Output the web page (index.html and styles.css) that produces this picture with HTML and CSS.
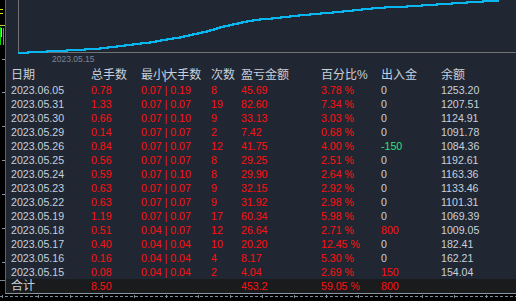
FILE: index.html
```html
<!DOCTYPE html>
<html>
<head>
<meta charset="utf-8">
<link rel="stylesheet" href="styles.css">
</head>
<body>
<div class="app">
  <div class="main">
    <svg class="strip" width="5" height="294" viewBox="0 0 5 294">
      <rect x="0" y="9" width="3" height="1" fill="#e6e600"/>
      <rect x="0" y="13" width="3" height="1" fill="#e6e600"/>
      <rect x="0" y="25" width="5" height="1" fill="#c8c850"/>
      <rect x="0" y="27" width="1" height="18" fill="#00dd00"/>
      <rect x="1" y="28" width="1" height="9" fill="#e6e600"/>
      <rect x="3" y="28" width="1" height="17" fill="#00dd00"/>
      <rect x="2" y="59" width="3" height="1" fill="#8a94a0"/>
      <rect x="2" y="92" width="3" height="1" fill="#8a94a0"/>
      <rect x="2" y="126" width="3" height="1" fill="#8a94a0"/>
      <rect x="2" y="160" width="3" height="1" fill="#8a94a0"/>
      <rect x="2" y="194" width="3" height="1" fill="#8a94a0"/>
      <rect x="2" y="228" width="3" height="1" fill="#8a94a0"/>
      <rect x="2" y="262" width="3" height="1" fill="#8a94a0"/>
      <rect x="0" y="280" width="5" height="1" fill="#7a8490"/>
    </svg>
    <div class="panel">
      <div class="chart">
        <svg class="plot" width="510" height="54" viewBox="6 0 510 54">
          <path class="axis" d="M18.5 0 V52.5 H516"/>
          <path class="equity" d="M18 53 H28 V52 H47 V51 H67 V50 H85 V49 H100 V48 H108 V47 H117 V46 H125 V45 H133 V44 H141 V43 H150 V42 H156 V41 H161 V40 H167 V39 H173 V38 H180 V37 H184 V36 H189 V35 H193 V34 H198 V33 H202 V32 H207 V31 H210 V30 H214 V29 H217 V28 H220 V27 H224 V26 H229 V25 H233 V24 H238 V23 H242 V22 H247 V21 H253 V20 H260 V19 H272 V18 H281 V17 H290 V16 H299 V15 H310 V14 H321 V13 H333 V12 H343 V11 H353 V10 H362 V9 H372 V8 H385 V7 H407 V6 H422 V5 H437 V4 H452 V3 H467 V2 H483 V1 H498 V-1 H516"/>
        </svg>
        <div class="axis-label">2023.05.15</div>
      </div>
      <div class="table">
        <div class="row head">
          <span>日期</span><span>总手数</span><span>最小<span class="bar">|</span>大手数</span><span>次数</span><span>盈亏金额</span><span>百分比%</span><span>出入金</span><span>余额</span>
        </div>
        <div class="row"><span>2023.06.05</span><span class="r">0.78</span><span class="r">0.07 | 0.19</span><span class="r">8</span><span class="r">45.69</span><span class="r">3.78 %</span><span>0</span><span>1253.20</span></div>
        <div class="row"><span>2023.05.31</span><span class="r">1.33</span><span class="r">0.07 | 0.07</span><span class="r">19</span><span class="r">82.60</span><span class="r">7.34 %</span><span>0</span><span>1207.51</span></div>
        <div class="row"><span>2023.05.30</span><span class="r">0.66</span><span class="r">0.07 | 0.10</span><span class="r">9</span><span class="r">33.13</span><span class="r">3.03 %</span><span>0</span><span>1124.91</span></div>
        <div class="row"><span>2023.05.29</span><span class="r">0.14</span><span class="r">0.07 | 0.07</span><span class="r">2</span><span class="r">7.42</span><span class="r">0.68 %</span><span>0</span><span>1091.78</span></div>
        <div class="row"><span>2023.05.26</span><span class="r">0.84</span><span class="r">0.07 | 0.07</span><span class="r">12</span><span class="r">41.75</span><span class="r">4.00 %</span><span class="g">-150</span><span>1084.36</span></div>
        <div class="row"><span>2023.05.25</span><span class="r">0.56</span><span class="r">0.07 | 0.07</span><span class="r">8</span><span class="r">29.25</span><span class="r">2.51 %</span><span>0</span><span>1192.61</span></div>
        <div class="row"><span>2023.05.24</span><span class="r">0.59</span><span class="r">0.07 | 0.10</span><span class="r">8</span><span class="r">29.90</span><span class="r">2.64 %</span><span>0</span><span>1163.36</span></div>
        <div class="row"><span>2023.05.23</span><span class="r">0.63</span><span class="r">0.07 | 0.07</span><span class="r">9</span><span class="r">32.15</span><span class="r">2.92 %</span><span>0</span><span>1133.46</span></div>
        <div class="row"><span>2023.05.22</span><span class="r">0.63</span><span class="r">0.07 | 0.07</span><span class="r">9</span><span class="r">31.92</span><span class="r">2.98 %</span><span>0</span><span>1101.31</span></div>
        <div class="row"><span>2023.05.19</span><span class="r">1.19</span><span class="r">0.07 | 0.07</span><span class="r">17</span><span class="r">60.34</span><span class="r">5.98 %</span><span>0</span><span>1069.39</span></div>
        <div class="row"><span>2023.05.18</span><span class="r">0.51</span><span class="r">0.04 | 0.07</span><span class="r">12</span><span class="r">26.64</span><span class="r">2.71 %</span><span class="r">800</span><span>1009.05</span></div>
        <div class="row"><span>2023.05.17</span><span class="r">0.40</span><span class="r">0.04 | 0.04</span><span class="r">10</span><span class="r">20.20</span><span class="r">12.45 %</span><span>0</span><span>182.41</span></div>
        <div class="row"><span>2023.05.16</span><span class="r">0.16</span><span class="r">0.04 | 0.04</span><span class="r">4</span><span class="r">8.17</span><span class="r">5.30 %</span><span>0</span><span>162.21</span></div>
        <div class="row"><span>2023.05.15</span><span class="r">0.08</span><span class="r">0.04 | 0.04</span><span class="r">2</span><span class="r">4.04</span><span class="r">2.69 %</span><span class="r">150</span><span>154.04</span></div>
        <div class="row total"><span class="cjk">合计</span><span class="r">8.50</span><span></span><span></span><span class="r">453.2</span><span class="r">59.05 %</span><span class="r">800</span><span></span></div>
      </div>
    </div>
  </div>
  <div class="footer"><div class="dash"></div></div>
</div>
</body>
</html>
```

FILE: styles.css
```css
html, body {
  margin: 0;
  padding: 0;
  background: #000;
}
.app {
  width: 516px;
  height: 301px;
  display: flex;
  flex-direction: column;
  background: #000;
  font-family: "Liberation Sans", "Noto Sans CJK SC", sans-serif;
  overflow: hidden;
}
.main {
  display: flex;
  height: 294px;
}
.strip {
  display: block;
  flex: 0 0 5px;
}
.panel {
  flex: 1;
  background: #212732;
  border-left: 1px solid #5a626e;
  border-bottom: 1px solid #8996a6;
  display: flex;
  flex-direction: column;
}
.chart {
  height: 68px;
}
.plot {
  display: block;
}
.axis {
  fill: none;
  stroke: #727272;
  stroke-width: 1;
}
.equity {
  fill: none;
  stroke: #08b6f0;
  stroke-width: 2;
}
.axis-label {
  padding-left: 46px;
  font-size: 8.5px;
  line-height: 10px;
  color: #7a8594;
}
.table {
  display: flex;
  flex-direction: column;
}
.row {
  display: grid;
  grid-template-columns: 80px 50px 70px 30px 80px 60px 60px 1fr;
  padding-left: 5px;
  height: 14px;
  line-height: 14px;
  font-size: 10.6px;
  color: #c6d0de;
  white-space: nowrap;
}
.row.head {
  height: 15px;
  line-height: 15px;
  font-size: 12px;
  color: #c6d0de;
}
.bar {
  margin: 0 -1.5px;
}
.row.total {
  background: #1a1b1d;
}
.cjk {
  font-size: 12px;
}
.r {
  color: #ff1010;
}
.g {
  color: #2ee07a;
}
.footer {
  height: 7px;
}
.dash {
  height: 3px;
  margin-top: 1px;
  background:
    repeating-linear-gradient(90deg, transparent 0 31px, #7d8a98 31px 32px) 7px 0 / 100% 3px repeat-x,
    repeating-linear-gradient(90deg, #7d8a98 0 3px, transparent 3px 5px) 0 1px / 100% 1px no-repeat;
}
```
